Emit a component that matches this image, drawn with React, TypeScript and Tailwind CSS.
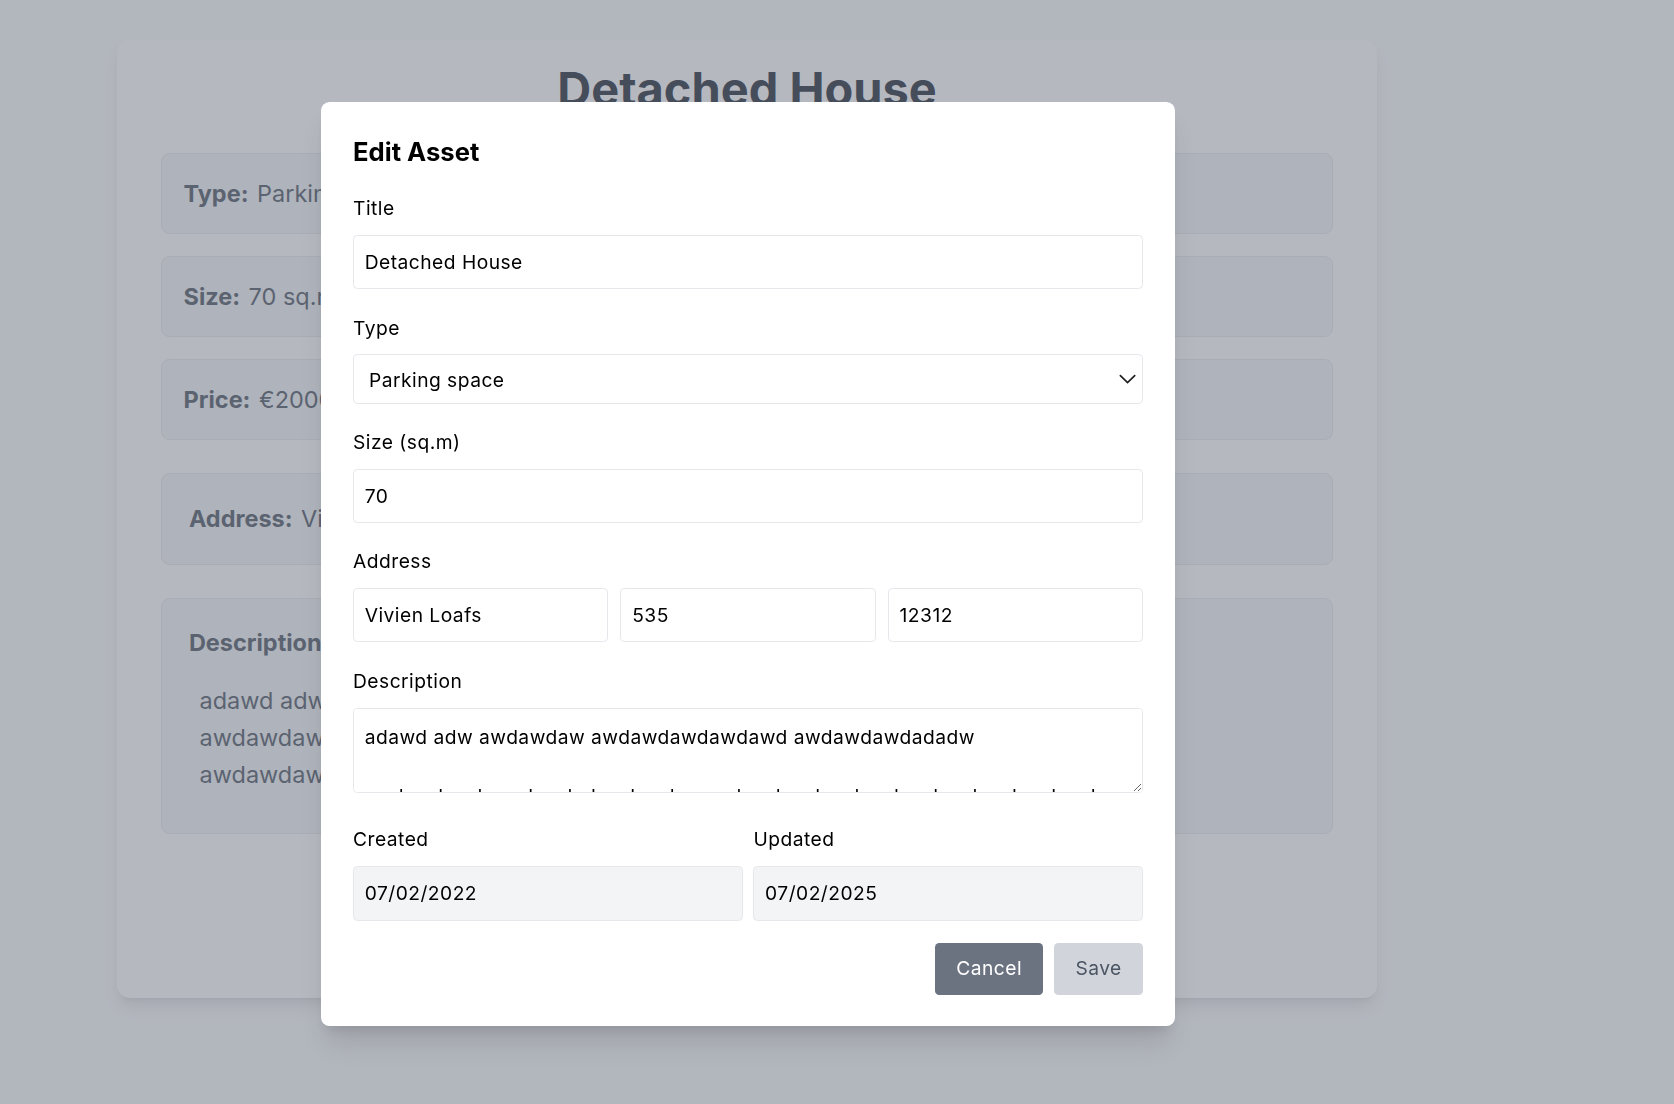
import React from "react";

const labelCls = "block text-lg leading-7 tracking-[0.025em] text-black";
const inputCls =
  "block w-full h-[50px] rounded border border-[#e5e7eb] bg-white px-2.5 text-lg leading-7 tracking-[0.025em] text-black outline-none";
const dateCls =
  "block h-[52px] w-full rounded border border-[#e5e7eb] bg-[#f3f4f6] px-2.5 text-lg tracking-[0.025em] text-black outline-none";

function Row({ label, value, className }: { label: string; value: string; className?: string }) {
  return (
    <div
      className={
        "flex items-center rounded-lg border border-[#e5e7eb] bg-[#f3f4f6] text-[22px] leading-[33px] text-[#4b5563] " +
        (className ?? "")
      }
    >
      <span className="mr-2 font-bold">{label}</span>
      <span className="whitespace-nowrap">{value}</span>
    </div>
  );
}

export default function App() {
  return (
    <div className="relative h-[1035px] w-[1568px] overflow-hidden bg-[#f9fafb] font-['Inter',sans-serif] [zoom:1.0676]">
      {/* Background page */}
      <div className="pl-[109.5px] pt-[37px]">
        <div className="h-[898px] w-[1180.5px] rounded-xl bg-white px-[41.5px] pt-[25px] shadow-lg">
          <h1 className="text-center text-[44px] font-bold leading-none text-[#1f2937]">Detached House</h1>
          <div className="mt-[37px] flex flex-col">
            <Row label="Type:" value="Parking space" className="h-[76px] px-5" />
            <Row label="Size:" value="70 sq.m" className="mt-[20.5px] h-[76px] px-5" />
            <Row label="Price:" value="€200000" className="mt-[20.5px] h-[76px] px-5" />
            <Row label="Address:" value="Vivien Loafs 535, 12312" className="mt-[31px] h-[86px] px-[25px]" />
            <div className="mt-[31px] h-[221px] rounded-lg border border-[#e5e7eb] bg-[#f3f4f6] px-[25px] pt-[25px] text-[22px] text-[#4b5563]">
              <div className="font-bold leading-[33px]">Description</div>
              <div className="mt-[21px] pl-2.5 leading-[34.5px]">
                <div>adawd adw awdawdaw awdawdawdawdawd awdawdawdadadw</div>
                <div>awdawdawdawdawdawdawdawdawdawdawdawdawd</div>
                <div>awdawdawdawdawdawdawdawdawdawd</div>
              </div>
            </div>
          </div>
        </div>
      </div>

      {/* Overlay */}
      <div className="absolute inset-0 bg-[#6b7280]/50">
        <div className="absolute left-[300.7px] top-[95.5px] w-[800px] rounded-lg bg-white px-[30px] pb-[29px] pt-[31px] shadow-xl">
          <h2 className="text-2xl font-bold leading-8 text-black">Edit Asset</h2>

          <div className="mt-[23px]">
            <label className={labelCls + " mb-[11px]"}>Title</label>
            <input className={inputCls} defaultValue="Detached House" />
          </div>

          <div className="mt-6">
            <label className={labelCls + " mb-[9px]"}>Type</label>
            <div className="relative">
              <select
                className="block h-[47px] w-full appearance-none rounded border border-[#e5e7eb] bg-white pl-3.5 pt-[3px] text-lg tracking-[0.025em] text-black outline-none"
                defaultValue="Parking space"
              >
                <option>Apartment</option>
                <option>House</option>
                <option>Parking space</option>
                <option>Commercial</option>
              </select>
              <svg
                className="pointer-events-none absolute right-[7px] top-1/2 -translate-y-1/2"
                width="16"
                height="9"
                viewBox="0 0 16 9"
                fill="none"
              >
                <path d="M0.8 0.8 L8 7.8 L15.2 0.8" stroke="#1f1f1f" strokeWidth="1.6" />
              </svg>
            </div>
          </div>

          <div className="mt-[22px]">
            <label className={labelCls + " mb-[11px]"}>Size (sq.m)</label>
            <input className={inputCls} defaultValue="70" />
          </div>

          <div className="mt-[22.5px]">
            <label className={labelCls + " mb-[11px]"}>Address</label>
            <div className="grid grid-cols-3 gap-[11.5px]">
              <input className={inputCls} defaultValue="Vivien Loafs" />
              <input className={inputCls} defaultValue="535" />
              <input className={inputCls} defaultValue="12312" />
            </div>
          </div>

          <div className="mt-6">
            <label className={labelCls + " mb-[10px]"}>Description</label>
            <textarea
              className="block h-[80px] w-full resize-y rounded border border-[#e5e7eb] bg-white px-2.5 pb-[9px] pt-[13px] text-lg leading-7 tracking-[0.025em] text-black outline-none"
              rows={2}
              defaultValue={
                "adawd adw awdawdaw awdawdawdawdawd awdawdawdadadw\n\nawdawdawdaawdawdadawdawdwaawdawdawdawdawdawdawdawdawdawdawdaw"
              }
            />
          </div>

          <div className="mt-[30px] grid grid-cols-2 gap-2.5">
            <div>
              <label className={labelCls + " mb-[10px]"}>Created</label>
              <input className={dateCls} defaultValue="07/02/2022" readOnly />
            </div>
            <div>
              <label className={labelCls + " mb-[10px]"}>Updated</label>
              <input className={dateCls} defaultValue="07/02/2025" readOnly />
            </div>
          </div>

          <div className="mt-5 flex justify-end gap-2.5">
            <button className="h-[49px] rounded bg-[#6b7280] px-5 text-lg tracking-[0.025em] text-white">Cancel</button>
            <button className="h-[49px] rounded bg-[#d1d5db] px-5 text-lg tracking-[0.025em] text-[#4b5563]">Save</button>
          </div>
        </div>
      </div>
    </div>
  );
}
